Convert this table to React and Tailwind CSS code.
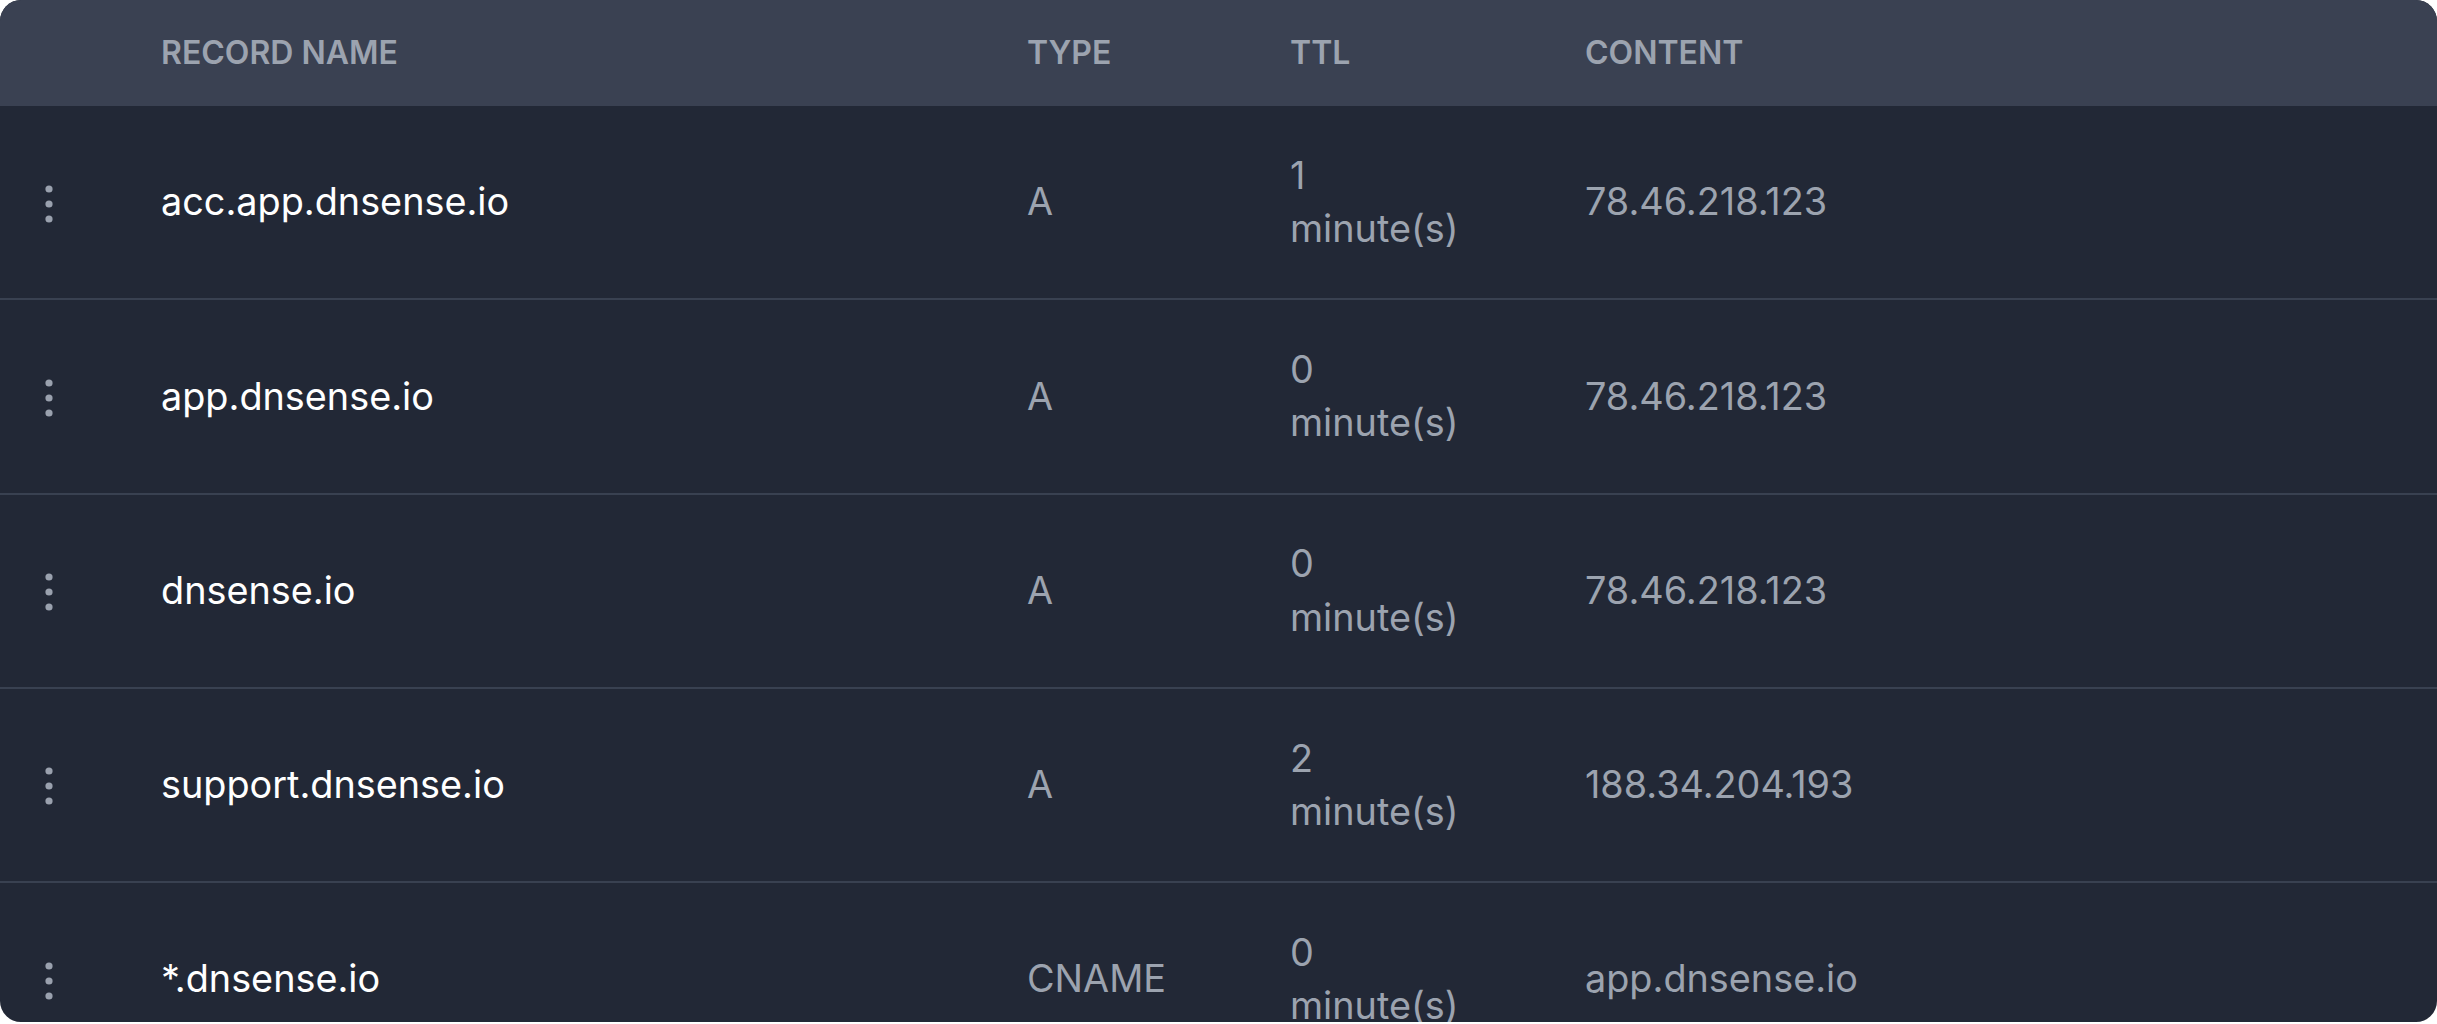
// Tabla de registros DNS: cabecera gris, filas oscuras con menu de tres puntos.

const registros = [
  { nombre: 'acc.app.dnsense.io', tipo: 'A', ttl: 1, contenido: '78.46.218.123' },
  { nombre: 'app.dnsense.io', tipo: 'A', ttl: 0, contenido: '78.46.218.123' },
  { nombre: 'dnsense.io', tipo: 'A', ttl: 0, contenido: '78.46.218.123' },
  { nombre: 'support.dnsense.io', tipo: 'A', ttl: 2, contenido: '188.34.204.193' },
  { nombre: '*.dnsense.io', tipo: 'CNAME', ttl: 0, contenido: 'app.dnsense.io' },
];

const COLS = 'grid grid-cols-[97px_866px_263px_295px_1fr]';

function Kebab() {
  return (
    <svg width="16" height="46" viewBox="0 0 16 46" className="mt-[3px] text-[#9aa1ae]" fill="currentColor">
      <circle cx="8" cy="8" r="3.6" />
      <circle cx="8" cy="23" r="3.6" />
      <circle cx="8" cy="38" r="3.6" />
    </svg>
  );
}

export default function App() {
  return (
    <div className="bg-white w-[2437px] h-[1024px] font-['Inter','Noto_Sans',sans-serif]">
      <div className="h-[1022px] rounded-[21px] overflow-hidden bg-[#222836]">
        <div className={COLS + ' h-[106px] items-center bg-[#3a4152] text-[32px] leading-[42.67px] font-semibold uppercase text-[#9ca3af]'}>
          <div />
          <div className="px-[64px]">Record name</div>
          <div className="px-[64px]">Type</div>
          <div className="px-[64px]">TTL</div>
          <div className="px-[64px]">Content</div>
        </div>

        <div>
          {registros.map((r, i) => (
            <div
              key={r.nombre}
              className={
                COLS +
                ' items-center py-[42.8px] text-[37.8px] leading-[53.33px] text-[#9ca3af] ' +
                (i > 0 ? 'border-t-2 border-[#394151]' : '')
              }
            >
              <div className="flex justify-center">
                <Kebab />
              </div>
              <div className="px-[64px] text-white">{r.nombre}</div>
              <div className="px-[64px]">{r.tipo}</div>
              <div className="px-[64px]">
                <div>{r.ttl}</div>
                <div>minute(s)</div>
              </div>
              <div className="px-[64px]">{r.contenido}</div>
            </div>
          ))}
        </div>
      </div>
    </div>
  );
}
